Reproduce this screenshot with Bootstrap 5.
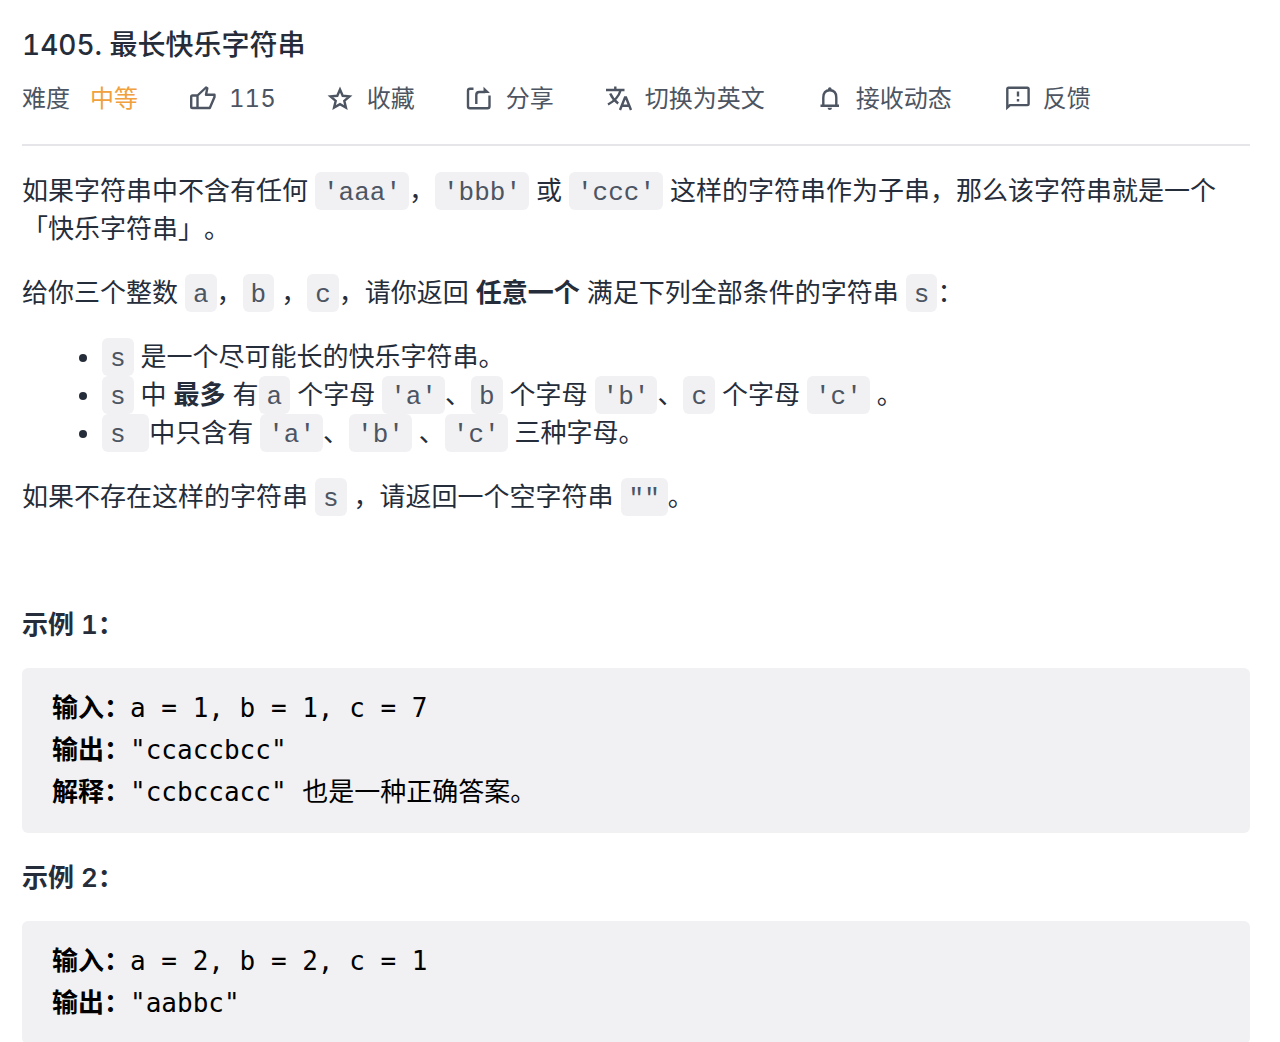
<!DOCTYPE html>
<html lang="zh-CN">
<head>
<meta charset="utf-8">
<meta name="viewport" content="width=device-width, initial-scale=1">
<title>1405. 最长快乐字符串</title>
<link href="https://cdn.jsdelivr.net/npm/bootstrap@5.3.0/dist/css/bootstrap.min.css" rel="stylesheet">
<style>
body{font-family:Inter,"Noto Sans CJK SC",sans-serif;color:#262d3a;background:#fff;text-spacing-trim:space-all;font-variant-numeric:tabular-nums}
.problem{padding:27px 30px 0 22px}
.problem-title{font-size:28px;line-height:36px;font-weight:500;margin-bottom:18px}
.meta-bar{font-size:24px;line-height:36px;color:#4d5562;gap:0 51px;padding-bottom:27px;border-bottom:2px solid #e5e5ea;margin-bottom:26px}
.meta-bar .btn{font-size:24px;font-variant-numeric:tabular-nums;gap:12px;color:inherit;line-height:36px}
.meta-bar svg{width:28px;height:28px;fill:none;stroke:currentColor;stroke-width:2.4;flex:none}
.level-box{gap:20px}
.level{color:#f0a03c}
.statement{font-size:26px;line-height:38px}
.statement p,.statement ul{margin-bottom:26px}
.statement ul{padding-left:80px}
.statement code{font:26px/1 "Liberation Mono",monospace;color:#4d5562;background:#f1f1f4;border-radius:6px;padding:6px 8px 2px;white-space:pre-wrap}
.statement strong{font-weight:600}
.statement pre{font:26px/42px "DejaVu Sans Mono","Noto Sans CJK SC",monospace;color:#000;background:#f1f1f4;border-radius:6px;padding:19px 30px 20px;margin-bottom:26px;white-space:pre-wrap}
.statement .example-head{margin-bottom:24px}
</style>
</head>
<body>
<main class="problem vh-100 overflow-hidden">
<h1 class="problem-title">1405. 最长快乐字符串</h1>
<div class="meta-bar d-flex flex-wrap align-items-center">
<div class="level-box d-flex"><span>难度</span><span class="level">中等</span></div>
<button type="button" class="btn border-0 p-0 d-flex align-items-center"><svg viewBox="0 0 28 28" aria-hidden="true"><path d="M8.500 10.500H3.500q-1.300 0-1.300 1.300v9.900q0 1.300 1.300 1.300h17.300l4.700-11v-2.200h-8.500l1.300-6.500-1.300-.8-8.500 8zM8.500 10.500V23" stroke-linejoin="round"/></svg><span>115</span></button>
<button type="button" class="btn border-0 p-0 d-flex align-items-center"><svg viewBox="0 0 28 28" aria-hidden="true"><path d="M13 4.500l2.700 6.300 6.800.6-5.200 4.500 1.600 6.700-5.900-3.500-5.900 3.500 1.600-6.700-5.200-4.500 6.800-.6z"/></svg><span>收藏</span></button>
<button type="button" class="btn border-0 p-0 d-flex align-items-center"><svg viewBox="0 0 28 28" aria-hidden="true"><path d="M7.500 3.700H4Q2 3.700 2 5.700v15.500q0 2 2 2h17.500q2 0 2-2V10.500M10.300 19V10q0-3 3-3h6"/><path d="M17.500 1.800l6 5.700v.6h-6z" fill="currentColor" stroke="none"/></svg><span>分享</span></button>
<button type="button" class="btn border-0 p-0 d-flex align-items-center"><svg viewBox="0 0 28 28" aria-hidden="true"><path d="M1 5h18.500M10.300 1.500V5M15.500 5.500q-2.300 8.500-12.500 14M5.200 8.500q2.300 5.500 8 10M15 25l5-12.500h1L26 25M17 20.800h7"/></svg><span>切换为英文</span></button>
<button type="button" class="btn border-0 p-0 d-flex align-items-center"><svg viewBox="0 0 28 28" aria-hidden="true"><path d="M4.500 20.800h18.500M7.300 20.500V12.500q0-7.300 6.500-7.300t6.500 7.300v8"/><path d="M12 5V4q0-1.700 1.800-1.700T15.600 4v1zM11.500 22.800h4.600q-.3 2.200-2.300 2.200t-2.300-2.200z" fill="currentColor" stroke="none"/></svg><span>接收动态</span></button>
<button type="button" class="btn border-0 p-0 d-flex align-items-center"><svg viewBox="0 0 28 28" aria-hidden="true"><path d="M4.300 22.500V4q0-1.300 1.300-1.300h18.700q1.300 0 1.300 1.300v14.800q0 1.300-1.300 1.300H7z"/><path d="M15 6.500v5M15 14v2.500"/></svg><span>反馈</span></button>
</div>
<article class="statement">
<p>如果字符串中不含有任何 <code>'aaa'</code>，<code>'bbb'</code> 或 <code>'ccc'</code> 这样的字符串作为子串，那么该字符串就是一个「快乐字符串」。</p>
<p>给你三个整数 <code>a</code>，<code>b</code> ，<code>c</code>，请你返回 <strong>任意一个</strong> 满足下列全部条件的字符串 <code>s</code>：</p>
<ul>
<li><code>s</code> 是一个尽可能长的快乐字符串。</li>
<li><code>s</code> 中 <strong>最多</strong> 有<code>a</code> 个字母 <code>'a'</code>、<code>b</code> 个字母 <code>'b'</code>、<code>c</code> 个字母 <code>'c'</code> 。</li>
<li><code>s </code>中只含有 <code>'a'</code>、<code>'b'</code> 、<code>'c'</code> 三种字母。</li>
</ul>
<p>如果不存在这样的字符串 <code>s</code> ，请返回一个空字符串 <code>""</code>。</p>
<p>&nbsp;</p>
<p class="example-head"><strong>示例 1：</strong></p>
<pre><strong>输入：</strong>a = 1, b = 1, c = 7
<strong>输出：</strong>"ccaccbcc"
<strong>解释：</strong>"ccbccacc" 也是一种正确答案。</pre>
<p class="example-head"><strong>示例 2：</strong></p>
<pre><strong>输入：</strong>a = 2, b = 2, c = 1
<strong>输出：</strong>"aabbc"</pre>
</article>
</main>
<script src="https://cdn.jsdelivr.net/npm/bootstrap@5.3.0/dist/js/bootstrap.bundle.min.js"></script>
</body>
</html>
